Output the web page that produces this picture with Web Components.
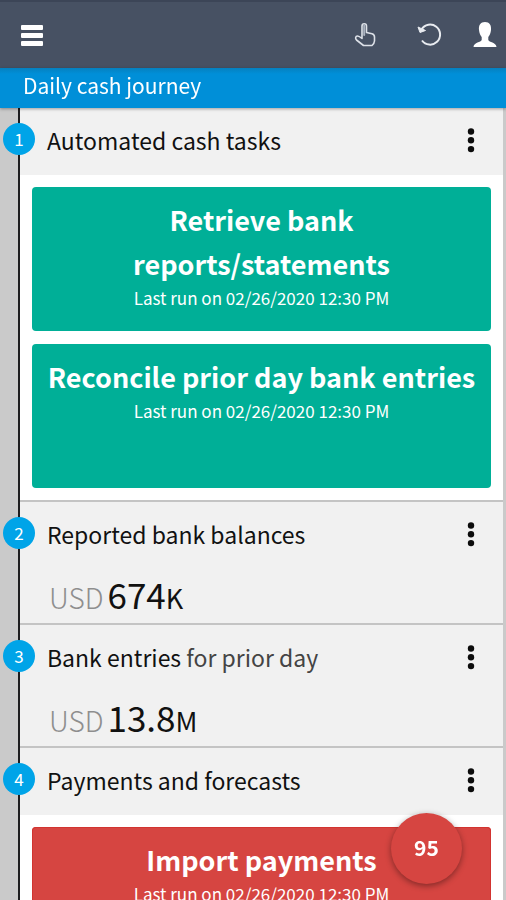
<!DOCTYPE html>
<html lang="en">
<head>
<meta charset="utf-8">
<meta name="viewport" content="width=device-width, initial-scale=1">
<title>Daily cash journey</title>
<style>
  body {
    margin: 0;
    font-family: "Noto Sans CJK SC", "Noto Sans", sans-serif;
    color: #111;
  }
</style>
</head>
<body>
<cash-app>
  <app-bar slot="bar"></app-bar>
  <journey-title slot="title">Daily cash journey</journey-title>

  <journey-step number="1">
    <span slot="heading">Automated cash tasks</span>
    <task-card when="02/26/2020 12:30 PM">Retrieve bank reports/statements</task-card>
    <task-card when="02/26/2020 12:30 PM">Reconcile prior day bank entries</task-card>
  </journey-step>

  <journey-step number="2">
    <span slot="heading">Reported bank balances</span>
    <money-value slot="value" currency="USD" unit="K">674</money-value>
  </journey-step>

  <journey-step number="3">
    <span slot="heading">Bank entries <span style="color:#444">for prior day</span></span>
    <money-value slot="value" currency="USD" unit="M">13.8</money-value>
  </journey-step>

  <journey-step number="4">
    <span slot="heading">Payments and forecasts</span>
    <task-card status="late" when="02/26/2020 12:30 PM">Import payments</task-card>
  </journey-step>

  <alert-button slot="alert">95</alert-button>
</cash-app>

<script>
// Small base class: renders a template string into an open shadow root
class BaseElement extends HTMLElement {
  constructor() {
    super();
    this.attachShadow({ mode: 'open' });
  }

  connectedCallback() {
    this.shadowRoot.innerHTML = this.template();
  }
}

class CashApp extends BaseElement {
  template() {
    return `
      <style>
        :host { display: flex; flex-direction: column; height: 100vh; overflow: hidden; }
        main {
          flex: 1; min-height: 0; overflow-y: auto; scrollbar-width: none;
          background: #cacaca;
        }
        .steps { margin: 0 3px 0 18px; border-left: 2px solid #1d1d1f; }
      </style>
      <slot name="bar"></slot>
      <slot name="title"></slot>
      <main><div class="steps"><slot></slot></div></main>
      <slot name="alert"></slot>
    `;
  }
}

class AppBar extends BaseElement {
  template() {
    return `
      <style>
        :host { display: block; background: #475163; border-top: 2px solid #3c4557; }
        header {
          display: flex; align-items: center; justify-content: space-between;
          height: 66px; padding: 0 7px 0 20px;
        }
        nav { display: flex; gap: 36px; }
        nav button:last-child { margin-left: -8px; }
        button { display: block; padding: 0; border: 0; background: none; color: #fff; cursor: pointer; }
        svg { display: block; }
      </style>
      <header>
        <button aria-label="Menu">
          <svg width="24" height="24" viewBox="0 0 24 24" fill="currentColor">
            <rect x="1" y="2" width="22" height="5" rx="1"/>
            <rect x="1" y="10" width="22" height="5" rx="1"/>
            <rect x="1" y="18" width="22" height="5" rx="1"/>
          </svg>
        </button>
        <nav>
          <button aria-label="Actions">
            <svg width="28" height="28" viewBox="0 0 28 28" fill="none" stroke="#dde1e8" stroke-width="1.600" stroke-linejoin="round" stroke-linecap="round">
              <path d="M11 17.500V5C11 2 15.500 2 15.500 5V11.500L21 12.800Q23.500 13.500 23.500 16V20Q23.300 22.500 21 24.500H12.500L5.500 19C4 17.500 4.500 15 6.500 15Q8 15 11 17.500"/>
              <path d="M13.200 4.500V14" stroke-width="2" stroke="#aab2bf"/>
            </svg>
          </button>
          <button aria-label="Refresh">
            <svg width="28" height="28" viewBox="0 0 28 28" fill="none" stroke="#e8ebf0" stroke-width="2">
              <path d="M6.500 8.500A10 10 0 1 1 7 19.500"/>
              <path d="M3 6L5 11.500L10.500 9.500Z" fill="#e8ebf0" stroke-width="1"/>
            </svg>
          </button>
          <button aria-label="Account">
            <svg width="28" height="28" viewBox="0 0 28 28" fill="currentColor">
              <path d="M14 1C18.500 1 20.500 4 20 9C19.700 12.500 18.500 14.500 17.300 16V19C18 21.500 25 21 25.500 26H2.500C3 21 10 21.500 10.700 19V16C9.500 14.500 8.300 12.500 8 9C7.500 4 9.500 1 14 1Z"/>
            </svg>
          </button>
        </nav>
      </header>
    `;
  }
}

class JourneyTitle extends BaseElement {
  template() {
    return `
      <style>
        :host {
          display: block; position: relative; z-index: 1;
          background: linear-gradient(#0580bf, #008fd8 6px);
          box-shadow: 0 1px 3px rgba(0, 0, 0, .35);
        }
        h1 {
          margin: 0; padding: 0 23px 6px; color: #fff;
          font-size: 21px; line-height: 34px; font-weight: 400;
        }
      </style>
      <h1><slot></slot></h1>
    `;
  }
}

class JourneyStep extends BaseElement {
  template() {
    return `
      <style>
        :host { display: block; position: relative; background: #f1f1f1; border-bottom: 2px solid #c4c4c4; }
        header {
          display: flex; align-items: center; justify-content: space-between;
          height: 64px; padding: 0 20px 3px 27px;
        }
        h2 { margin: 0; font-size: 23px; line-height: 36px; font-weight: 400; }
        /* sits across the timeline rule */
        .number {
          position: absolute; left: -17px; top: 15px;
          width: 32px; height: 32px; border-radius: 50%;
          background: #00a4e8; color: #fff;
          font-size: 17px; line-height: 32px; text-align: center;
        }
        button { display: block; width: 24px; height: 36px; padding: 0; border: 0; background: none; cursor: pointer; }
        svg { display: block; }
        .tasks { display: flex; flex-direction: column; gap: 13px; background: #fff; }
        .tasks.filled { padding: 12px; }
      </style>
      <header>
        <span class="number">${this.getAttribute('number')}</span>
        <h2><slot name="heading"></slot></h2>
        <button aria-label="More options">
          <svg width="24" height="36" viewBox="0 0 24 36" fill="#0c0c0c">
            <circle cx="12" cy="9.500" r="3.200"/>
            <circle cx="12" cy="18.300" r="3.200"/>
            <circle cx="12" cy="27.100" r="3.200"/>
          </svg>
        </button>
      </header>
      <slot name="value"></slot>
      <div class="tasks ${this.querySelector('task-card') ? 'filled' : ''}"><slot></slot></div>
    `;
  }
}

class TaskCard extends BaseElement {
  template() {
    return `
      <style>
        :host { display: block; }
        button {
          display: flex; flex-direction: column; align-items: center;
          width: 100%; min-height: 144px; padding: 11px 12px 16px;
          border: 0; border-radius: 4px; background: #00af97; color: #fff;
          font: inherit; text-align: center; cursor: pointer;
        }
        :host([status="late"]) button { background: #d64541; box-shadow: inset 0 0 0 1px #d23430; }
        .name { max-width: 440px; font-size: 27px; line-height: 44px; font-weight: 700; }
        .when { font-size: 17px; line-height: 24px; }
      </style>
      <button>
        <span class="name"><slot></slot></span>
        <span class="when">Last run on ${this.getAttribute('when')}</span>
      </button>
    `;
  }
}

class MoneyValue extends BaseElement {
  template() {
    return `
      <style>
        :host { display: flex; align-items: baseline; height: 54px; padding-left: 29px; line-height: 50px; }
        .currency { margin-right: 4px; color: #8e8e8e; font-size: 28px; font-weight: 300; }
        .amount { font-size: 35px; }
        .unit { font-size: 27px; }
      </style>
      <span class="currency">${this.getAttribute('currency')}</span>
      <span class="amount"><slot></slot></span>
      <span class="unit">${this.getAttribute('unit')}</span>
    `;
  }
}

class AlertButton extends BaseElement {
  template() {
    return `
      <style>
        :host { position: fixed; right: 44px; bottom: 16px; z-index: 2; }
        button {
          display: block; width: 71px; height: 71px; padding: 0 0 4px; border: 0; border-radius: 50%;
          background: #d64541; color: #fff; box-shadow: 0 2px 6px rgba(0, 0, 0, .4);
          font: inherit; font-size: 21px; font-weight: 700; cursor: pointer;
        }
      </style>
      <button><slot></slot></button>
    `;
  }
}

customElements.define('cash-app', CashApp);
customElements.define('app-bar', AppBar);
customElements.define('journey-title', JourneyTitle);
customElements.define('journey-step', JourneyStep);
customElements.define('task-card', TaskCard);
customElements.define('money-value', MoneyValue);
customElements.define('alert-button', AlertButton);
</script>
</body>
</html>
